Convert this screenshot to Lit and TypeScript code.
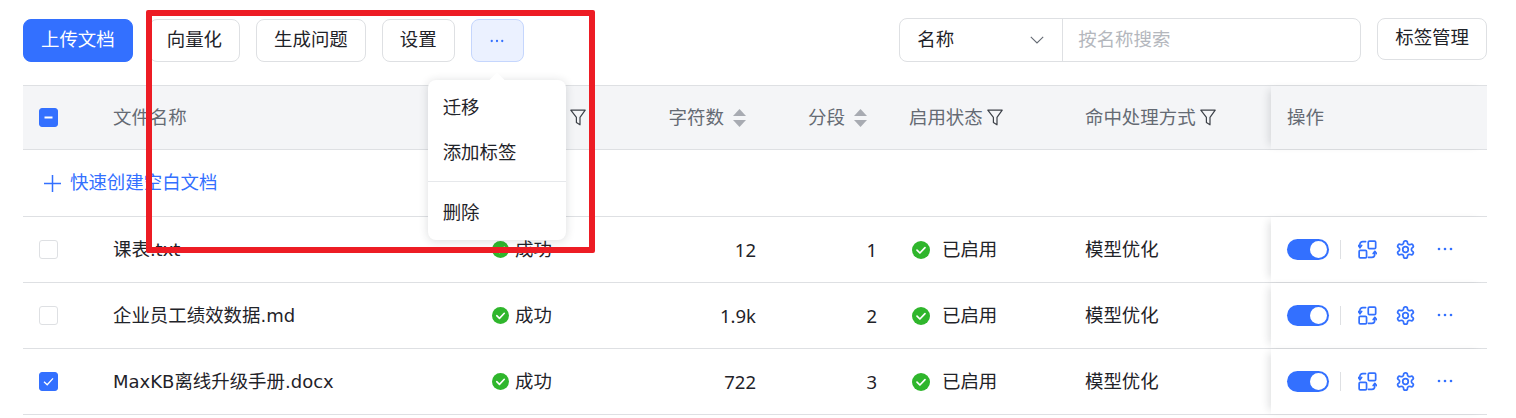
import { LitElement, html, css } from 'lit';
import { customElement } from 'lit/decorators.js';

interface DocRow {
  name: string;
  chars: string;
  segments: number;
  checked: boolean;
}

const rows: DocRow[] = [
  { name: '课表.txt', chars: '12', segments: 1, checked: false },
  { name: '企业员工绩效数据.md', chars: '1.9k', segments: 2, checked: false },
  { name: 'MaxKB离线升级手册.docx', chars: '722', segments: 3, checked: true },
];

const funnel = html`<svg class="funnel" viewBox="0 0 16 17" fill="none" stroke="#3c4148" stroke-width="1.2" stroke-linejoin="round">
  <path d="M.8 1.2h14.4L10 8.4v7.4L6.4 13.6V8.4z" />
</svg>`;

const sorter = html`<svg class="sorter" viewBox="0 0 13 18" fill="#a8abb2">
  <path d="M6.5 0 13 7H0z" /><path d="M0 11h13l-6.5 7z" />
</svg>`;

const okDot = (cls: string) => html`<svg class=${cls} viewBox="0 0 18 18">
  <circle cx="9" cy="9" r="9" fill="#2fb62c" />
  <path d="M5 9.2l2.9 2.8L13 6.6" fill="none" stroke="#fff" stroke-width="1.7" stroke-linecap="round" stroke-linejoin="round" />
</svg>`;

const dots = html`<svg class="dots" viewBox="0 0 16 4" fill="#3370ff">
  <circle cx="2" cy="2" r="1.3" /><circle cx="8" cy="2" r="1.3" /><circle cx="14" cy="2" r="1.3" />
</svg>`;

const swapIcon = html`<svg class="act" viewBox="0 0 20 20" fill="none" stroke="#3370ff" stroke-width="1.8" stroke-linecap="round" stroke-linejoin="round">
  <rect x="10.8" y="1.2" width="7.8" height="7.8" rx="1.2" />
  <rect x="1.2" y="11" width="7.8" height="7.8" rx="1.2" />
  <path d="M8 1.6H5a3 3 0 0 0-3 3V8" />
  <path d="M.4 5.8 2 8l1.8-2.2" />
  <path d="M11 18.2h3.6a3 3 0 0 0 3-3v-3" />
  <path d="M16 14.2l1.7-2.2 1.8 2.2" />
</svg>`;

const gearIcon = html`<svg class="act gear" viewBox="1 1 22 22" fill="none" stroke="#3370ff" stroke-width="2" stroke-linecap="round" stroke-linejoin="round">
  <path d="M12.22 2h-.44a2 2 0 0 0-2 2v.18a2 2 0 0 1-1 1.73l-.43.25a2 2 0 0 1-2 0l-.15-.08a2 2 0 0 0-2.73.73l-.22.38a2 2 0 0 0 .73 2.73l.15.1a2 2 0 0 1 1 1.72v.51a2 2 0 0 1-1 1.74l-.15.09a2 2 0 0 0-.73 2.73l.22.38a2 2 0 0 0 2.73.73l.15-.08a2 2 0 0 1 2 0l.43.25a2 2 0 0 1 1 1.73V20a2 2 0 0 0 2 2h.44a2 2 0 0 0 2-2v-.18a2 2 0 0 1 1-1.73l.43-.25a2 2 0 0 1 2 0l.15.08a2 2 0 0 0 2.73-.73l.22-.39a2 2 0 0 0-.73-2.73l-.15-.08a2 2 0 0 1-1-1.74v-.5a2 2 0 0 1 1-1.74l.15-.09a2 2 0 0 0 .73-2.73l-.22-.38a2 2 0 0 0-2.73-.73l-.15.08a2 2 0 0 1-2 0l-.43-.25a2 2 0 0 1-1-1.73V4a2 2 0 0 0-2-2z" />
  <circle cx="12" cy="12" r="3.2" />
</svg>`;

// latin parts of a file name run smaller than the cjk parts
const fileName = (name: string) =>
  name.split(/([\x00-\x7f]+)/).map((part) =>
    /^[\x00-\x7f]+$/.test(part) ? html`<span class="latin">${part}</span>` : part
  );

@customElement('app-root')
class AppRoot extends LitElement {
  static styles = css`
    :host {
      display: block;
      position: relative;
      height: 418px;
      overflow: hidden;
      box-sizing: border-box;
      padding: 18px 29px 0 23px;
      background: #fff;
      color: #1f2329;
      font-family: 'DejaVu Sans', 'Noto Sans CJK SC', sans-serif;
      font-size: 18.45px;
      line-height: 26px;
    }
    .toolbar {
      display: flex;
      justify-content: space-between;
      align-items: flex-start;
      margin-bottom: 23px;
    }
    .left {
      display: flex;
      gap: 16px;
      margin-top: 1px;
    }
    .right {
      display: flex;
      gap: 16px;
    }
    .btn {
      box-sizing: border-box;
      height: 43px;
      padding: 0 17px 2px;
      display: flex;
      align-items: center;
      justify-content: center;
      border: 1px solid #dee0e3;
      border-radius: 8px;
      background: #fff;
    }
    .btn.primary {
      background: #3370ff;
      border-color: #3370ff;
      color: #fff;
    }
    .btn.more {
      width: 53px;
      padding: 0;
      background: #ebf1ff;
      border-color: #c5d6fd;
    }
    .btn.tags {
      height: 42px;
    }
    .more-wrap {
      position: relative;
    }
    .more .dots {
      width: 14px;
      height: 4px;
    }
    .popover {
      position: absolute;
      top: 61px;
      left: -43px;
      width: 138px;
      height: 160px;
      box-sizing: border-box;
      padding: 5.5px 0 0;
      background: #fff;
      border-radius: 8px;
      box-shadow: 0 1px 10px rgba(31, 35, 41, 0.16);
    }
    .popover::before {
      content: '';
      position: absolute;
      top: -5px;
      left: 63px;
      width: 12px;
      height: 12px;
      background: #fff;
      transform: rotate(45deg);
    }
    .popover .item {
      position: relative;
      height: 45px;
      padding-left: 15px;
      display: flex;
      align-items: center;
    }
    .popover hr {
      border: 0;
      border-top: 1px solid #e6e8eb;
      margin: 5.5px 0 8px;
    }
    .search {
      box-sizing: border-box;
      width: 462px;
      height: 44px;
      display: flex;
      border: 1px solid #dee0e3;
      border-radius: 8px;
    }
    .select {
      width: 163px;
      padding: 0 18px 0 17px;
      box-sizing: border-box;
      display: flex;
      align-items: center;
      justify-content: space-between;
      border-right: 1px solid #dee0e3;
    }
    .select svg {
      width: 14px;
      height: 8px;
    }
    .placeholder {
      padding-left: 15px;
      display: flex;
      align-items: center;
      color: #b4b7bd;
    }
    .grid {
      display: grid;
      grid-template-columns: 74px 379px 124px 172px 121px 176px 202px 216px;
      box-sizing: border-box;
      border-bottom: 1px solid #dee0e3;
    }
    .grid > div {
      display: flex;
      align-items: center;
      padding: 0 16px;
      box-sizing: border-box;
      min-width: 0;
      white-space: nowrap;
    }
    .head {
      height: 65px;
      background: #f4f5f7;
      border-top: 1px solid #dee0e3;
      color: #646a73;
    }
    .row {
      height: 66px;
      background: #fff;
    }
    .row:last-of-type {
      height: 67px;
    }
    .latin {
      font-size: 18px;
    }
    .grid > .num {
      justify-content: flex-end;
      font-family: 'Noto Sans', 'Noto Sans CJK SC', sans-serif;
      font-size: 18.5px;
    }
    .head > .num {
      padding-right: 26px;
      font-family: 'DejaVu Sans', 'Noto Sans CJK SC', sans-serif;
    }
    .grid > .op {
      background: inherit;
      box-shadow: -6px 0 8px -4px rgba(31, 35, 41, 0.14);
    }
    .grid > .check {
      padding: 0 0 0 16px;
    }
    .box {
      box-sizing: border-box;
      width: 19px;
      height: 19px;
      border: 1px solid #dee0e3;
      border-radius: 3px;
      background: #fff;
      display: flex;
      align-items: center;
      justify-content: center;
    }
    .box.on {
      background: #3370ff;
      border-color: #3370ff;
    }
    .box svg {
      width: 13px;
      height: 13px;
    }
    .funnel {
      width: 16px;
      height: 17px;
      margin-left: 4px;
      flex: none;
    }
    .sorter {
      width: 13px;
      height: 18px;
      margin-left: 9px;
      flex: none;
    }
    .grid > .status-head {
      justify-content: flex-end;
      padding-right: 14px;
    }
    .dot-sm {
      width: 17px;
      height: 17px;
      margin-right: 6px;
      flex: none;
    }
    .dot-lg {
      width: 18px;
      height: 18px;
      margin: 0 12px 0 3px;
      flex: none;
    }
    .quick {
      height: 67px;
      padding-left: 21px;
      display: flex;
      align-items: center;
      color: #3370ff;
      border-bottom: 1px solid #dee0e3;
      box-sizing: border-box;
    }
    .quick svg {
      width: 17px;
      height: 17px;
      margin-right: 9px;
    }
    .switch {
      box-sizing: border-box;
      width: 42px;
      height: 21px;
      padding: 2px;
      border-radius: 11px;
      background: #3370ff;
      display: flex;
      justify-content: flex-end;
    }
    .switch i {
      display: block;
      width: 17px;
      height: 17px;
      border-radius: 50%;
      background: #fff;
    }
    .sep {
      width: 1px;
      height: 19px;
      background: #dee0e3;
      margin: 0 17px 0 11px;
    }
    .act {
      width: 19px;
      height: 19px;
      margin-right: 19px;
      flex: none;
    }
    .act.gear {
      margin-right: 22px;
    }
    .op .dots {
      width: 16px;
      height: 4px;
      margin-top: -2px;
      flex: none;
    }
    .frame {
      position: absolute;
      left: 146px;
      top: 10px;
      width: 449px;
      height: 243px;
      box-sizing: border-box;
      border: 6px solid #ed1c24;
      border-radius: 2px;
      pointer-events: none;
    }
  `;

  private renderRow(row: DocRow) {
    return html`
      <div class="grid row">
        <div class="check">
          <span class="box ${row.checked ? 'on' : ''}">
            ${row.checked
              ? html`<svg viewBox="0 0 13 13" fill="none" stroke="#fff" stroke-width="1.3"><path d="M2 6.8l3.2 3L11 3.4" /></svg>`
              : ''}
          </span>
        </div>
        <div><span>${fileName(row.name)}</span></div>
        <div>${okDot('dot-sm')}成功</div>
        <div class="num">${row.chars}</div>
        <div class="num">${row.segments}</div>
        <div>${okDot('dot-lg')}已启用</div>
        <div>模型优化</div>
        <div class="op">
          <span class="switch"><i></i></span>
          <span class="sep"></span>
          ${swapIcon}${gearIcon}${dots}
        </div>
      </div>
    `;
  }

  render() {
    return html`
      <div class="toolbar">
        <div class="left">
          <div class="btn primary">上传文档</div>
          <div class="btn">向量化</div>
          <div class="btn">生成问题</div>
          <div class="btn">设置</div>
          <div class="more-wrap">
            <div class="btn more">${dots}</div>
            <div class="popover">
              <div class="item">迁移</div>
              <div class="item">添加标签</div>
              <hr />
              <div class="item">删除</div>
            </div>
          </div>
        </div>
        <div class="right">
          <div class="search">
            <div class="select">
              名称
              <svg viewBox="0 0 14 8" fill="none" stroke="#646a73" stroke-width="1.1"><path d="M.8.8 7 7 13.2.8" /></svg>
            </div>
            <div class="placeholder">按名称搜索</div>
          </div>
          <div class="btn tags">标签管理</div>
        </div>
      </div>
      <div class="grid head">
        <div class="check">
          <span class="box on">
            <svg viewBox="0 0 13 13" fill="none" stroke="#fff" stroke-width="2"><path d="M2.5 6.5h8" /></svg>
          </span>
        </div>
        <div>文件名称</div>
        <div class="status-head">${funnel}</div>
        <div class="num">字符数${sorter}</div>
        <div class="num">分段${sorter}</div>
        <div>启用状态${funnel}</div>
        <div>命中处理方式${funnel}</div>
        <div class="op">操作</div>
      </div>
      <div class="quick">
        <svg viewBox="0 0 17 17" fill="none" stroke="#3370ff" stroke-width="1.5"><path d="M8.5 0v17M0 8.5h17" /></svg>
        快速创建空白文档
      </div>
      ${rows.map((row) => this.renderRow(row))}
      <div class="frame"></div>
    `;
  }
}

declare global {
  interface HTMLElementTagNameMap {
    'app-root': AppRoot;
  }
}
